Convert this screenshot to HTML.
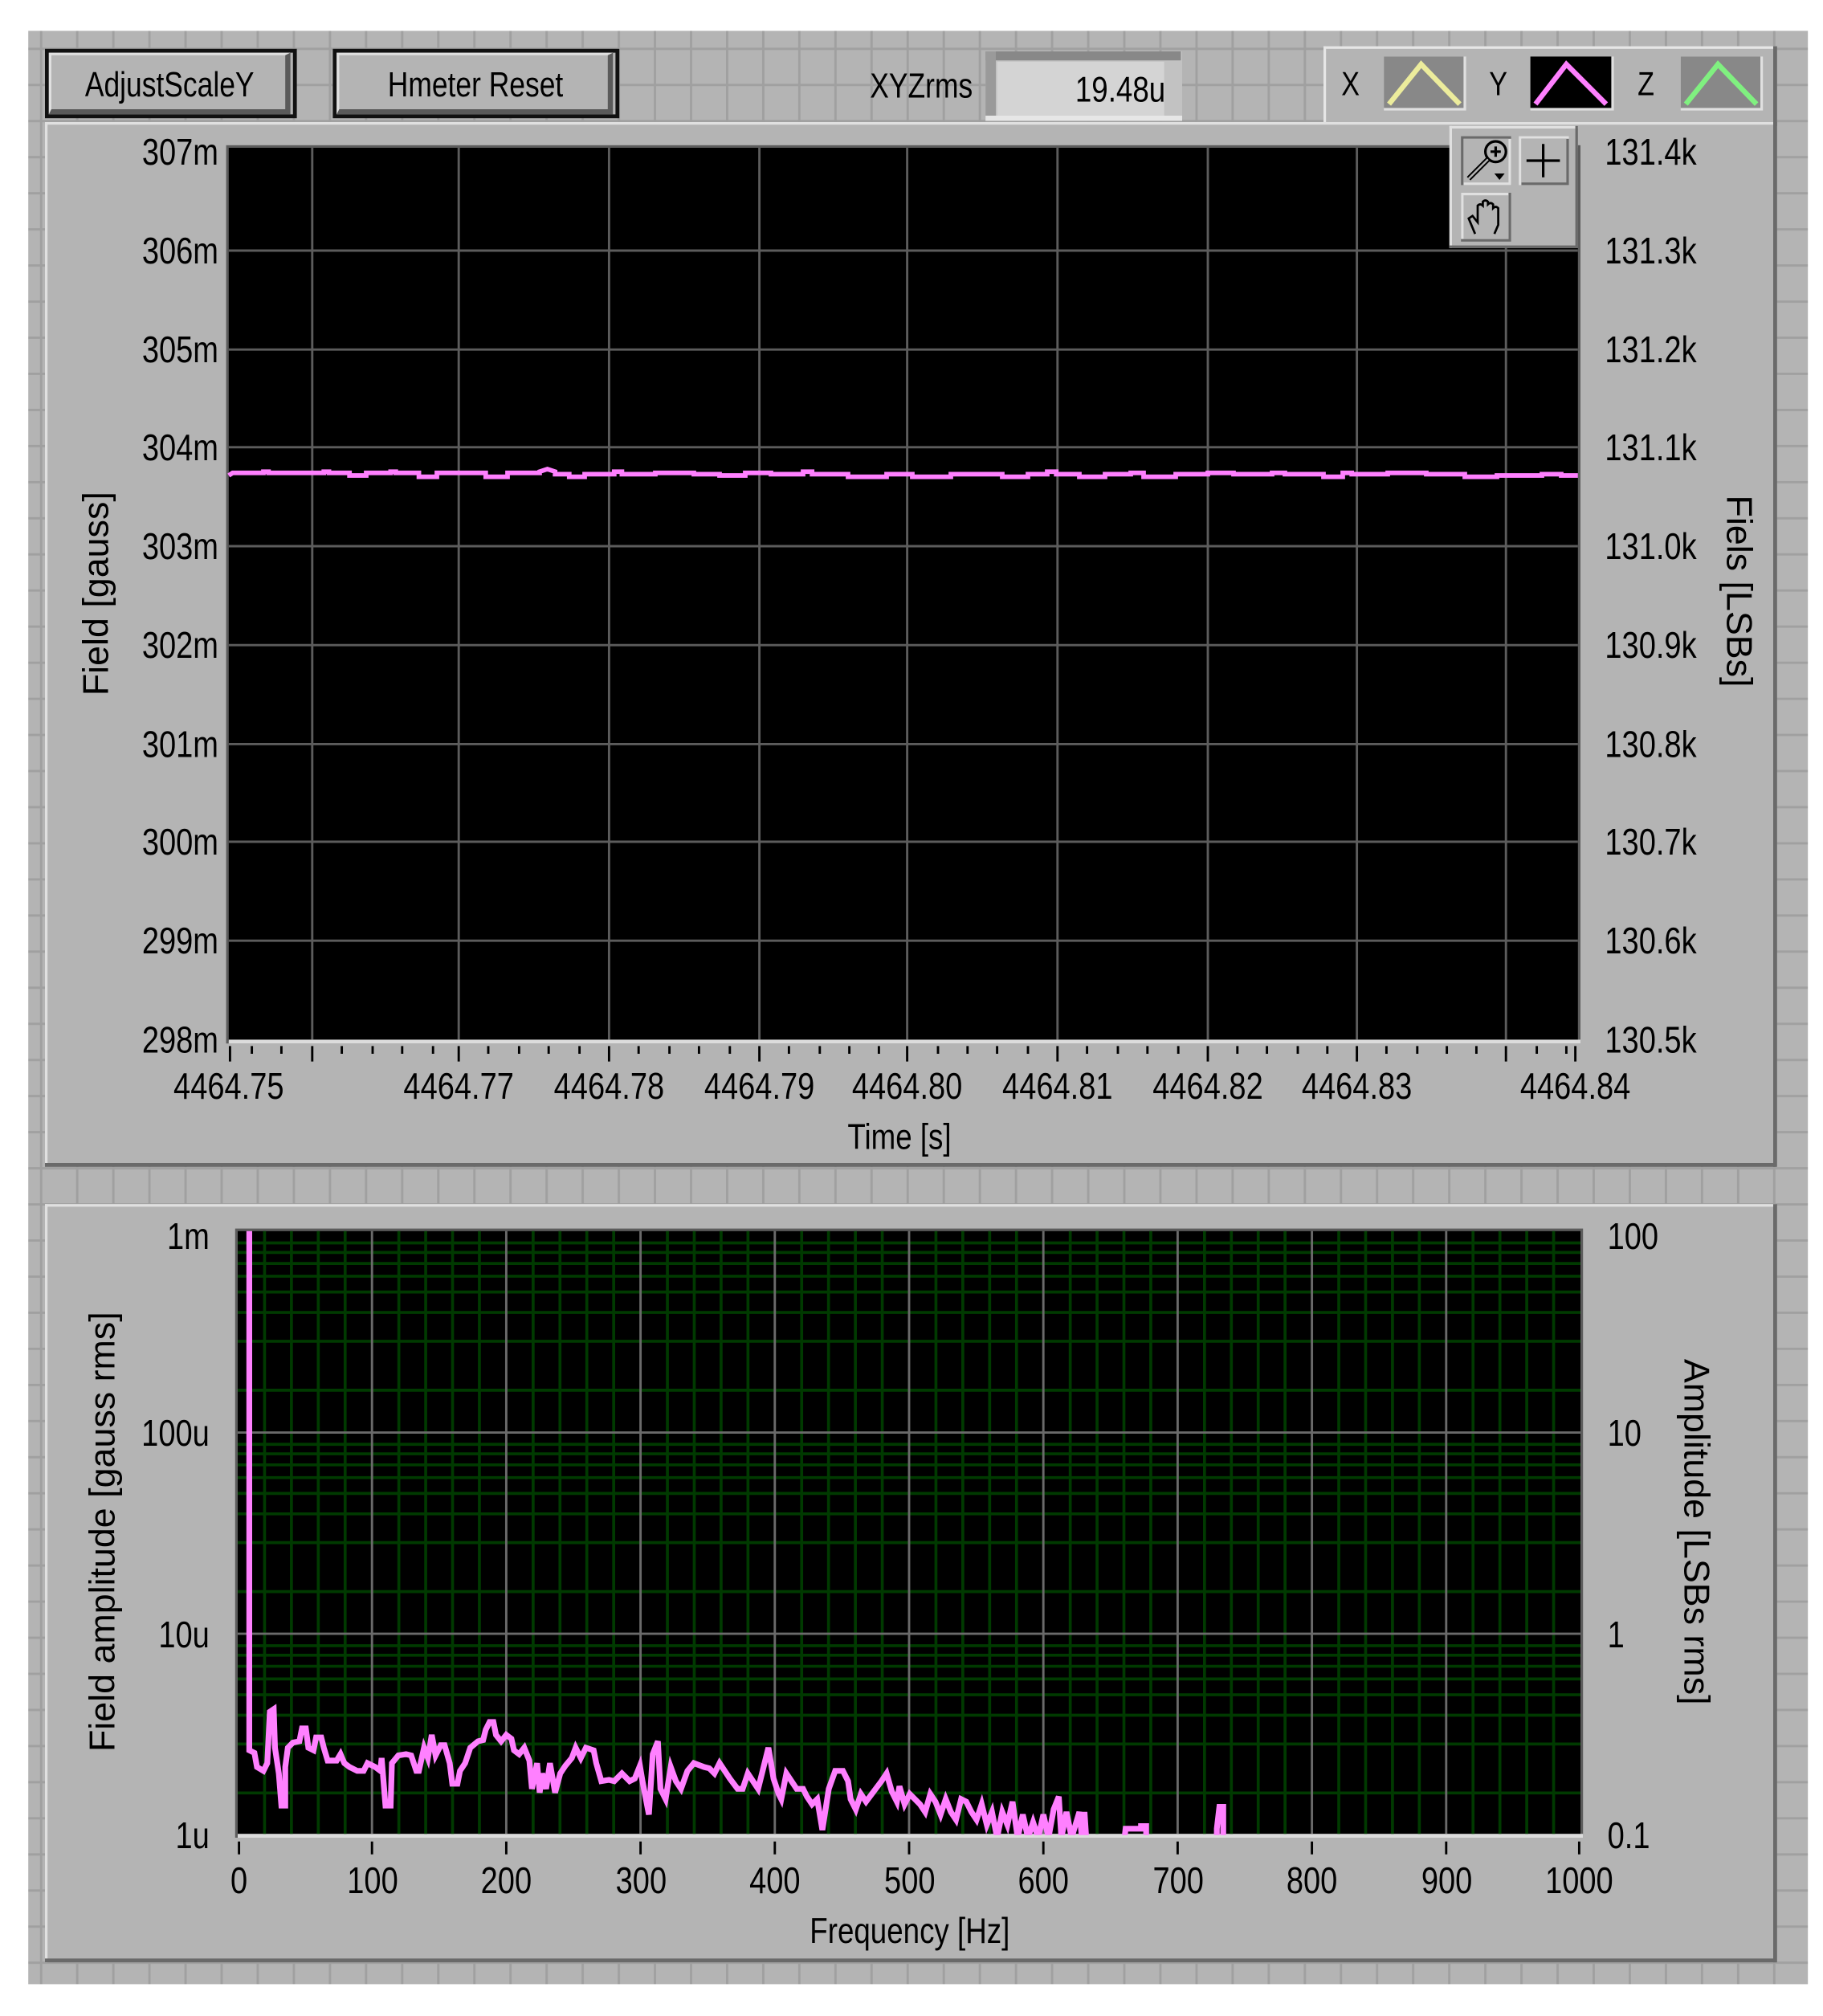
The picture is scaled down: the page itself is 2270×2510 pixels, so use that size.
<!DOCTYPE html>
<html><head><meta charset="utf-8">
<style>
html,body{margin:0;padding:0;background:#fff;}
svg{display:block;}
text{font-family:"Liberation Sans",sans-serif;fill:#000;transform-box:fill-box;}
.e{text-anchor:end;transform:scaleX(0.82);transform-origin:right center;}
.m{text-anchor:middle;transform:scaleX(0.82);transform-origin:center center;}
.s{text-anchor:start;transform:scaleX(0.82);transform-origin:left center;}
</style></head><body>
<svg width="2270" height="2510" viewBox="0 0 1418.75 1568.75" xmlns="http://www.w3.org/2000/svg">
<defs>
<pattern id="pg" x="3" y="9" width="28.1" height="28.1" patternUnits="userSpaceOnUse">
<rect width="28.1" height="28.1" fill="#b4b4b4"/>
<rect x="0" y="0" width="1.8" height="28.1" fill="#a0a0a0"/>
<rect x="0" y="0" width="28.1" height="1.8" fill="#a0a0a0"/>
</pattern>
</defs>
<rect x="0" y="0" width="1418.75" height="1568.75" fill="#fff"/>
<rect x="22" y="24" width="1385" height="1520" fill="url(#pg)"/>

<!-- buttons -->
<rect x="35" y="38" width="196" height="54" fill="#111"/>
<rect x="38" y="41" width="190" height="48" fill="#b4b4b4"/>
<path d="M38 41 H226 L224 43 H40 V88 L38 89Z" fill="#e0e0e0"/>
<path d="M226 41 V89 H38 L40 85 H222 V43Z" fill="#5a5a5a"/>
<text x="132" y="75" class="m" font-size="27">AdjustScaleY</text>
<rect x="259" y="38" width="223" height="54" fill="#111"/>
<rect x="262" y="41" width="217" height="48" fill="#b4b4b4"/>
<path d="M262 41 H477 L475 43 H264 V88 L262 89Z" fill="#e0e0e0"/>
<path d="M477 41 V89 H262 L264 85 H473 V43Z" fill="#5a5a5a"/>
<text x="370" y="75" class="m" font-size="27">Hmeter Reset</text>

<text x="757" y="76" class="e" font-size="27">XYZrms</text>
<rect x="767" y="40" width="153" height="54" fill="#c2c2c2"/>
<rect x="767" y="40" width="152" height="7" fill="#888"/>
<rect x="767" y="40" width="8" height="52" fill="#9a9a9a"/>
<rect x="776" y="48" width="130" height="43" fill="#d4d4d4"/>
<rect x="767" y="90" width="153" height="4" fill="#e6e6e6"/>
<text x="907" y="79" class="e" font-size="28">19.48u</text>

<!-- legend -->
<rect x="1030" y="36" width="352" height="61" fill="#b4b4b4"/>
<rect x="1030" y="36" width="352" height="2" fill="#e6e6e6"/>
<rect x="1030" y="36" width="2" height="60" fill="#e6e6e6"/>
<rect x="1031" y="95" width="351" height="3" fill="#6a6a6a"/>
<rect x="1380" y="36" width="3" height="62" fill="#6a6a6a"/>
<text x="1051" y="74" class="m" font-size="26">X</text>
<rect x="1077" y="44" width="64" height="42" fill="#e0e0e0"/><rect x="1077" y="44" width="62" height="40" fill="#888"/>
<polyline points="1081,81 1106,50 1136,81" fill="none" stroke="#ecec9c" stroke-width="4"/>
<text x="1166" y="74" class="m" font-size="26">Y</text>
<rect x="1191" y="44" width="65" height="42" fill="#e0e0e0"/><rect x="1191" y="44" width="63" height="40" fill="#000"/>
<polyline points="1195,81 1219,50 1250,81" fill="none" stroke="#ff80ff" stroke-width="4"/>
<text x="1281" y="74" class="m" font-size="26">Z</text>
<rect x="1308" y="44" width="64" height="42" fill="#e0e0e0"/><rect x="1308" y="44" width="62" height="40" fill="#888"/>
<polyline points="1312,81 1337,50 1367,81" fill="none" stroke="#80f080" stroke-width="4"/>

<!-- top panel -->
<rect x="35" y="95" width="1347" height="812" fill="#b4b4b4"/>
<rect x="35" y="95" width="1347" height="2" fill="#e0e0e0"/>
<rect x="35" y="95" width="2" height="812" fill="#e0e0e0"/>
<rect x="35" y="905" width="1347" height="3" fill="#6a6a6a"/>
<rect x="1380" y="95" width="3" height="813" fill="#6a6a6a"/>

<rect x="176" y="113" width="1054" height="699" fill="#5c5c5c"/>
<rect x="178" y="115" width="1050" height="695" fill="#000"/>
<rect x="178" y="809" width="1052" height="3" fill="#dcdcdc"/>
<g stroke="#5c5c5c" stroke-width="1.8">
<line x1="178" y1="195" x2="1228" y2="195"/><line x1="178" y1="272" x2="1228" y2="272"/>
<line x1="178" y1="348" x2="1228" y2="348"/><line x1="178" y1="425" x2="1228" y2="425"/>
<line x1="178" y1="502" x2="1228" y2="502"/><line x1="178" y1="579" x2="1228" y2="579"/>
<line x1="178" y1="655" x2="1228" y2="655"/><line x1="178" y1="732" x2="1228" y2="732"/>
<line x1="243" y1="115" x2="243" y2="809"/><line x1="357" y1="115" x2="357" y2="809"/>
<line x1="474" y1="115" x2="474" y2="809"/><line x1="591" y1="115" x2="591" y2="809"/>
<line x1="706" y1="115" x2="706" y2="809"/><line x1="823" y1="115" x2="823" y2="809"/>
<line x1="940" y1="115" x2="940" y2="809"/><line x1="1056" y1="115" x2="1056" y2="809"/>
<line x1="1172" y1="115" x2="1172" y2="809"/>
</g>
<polyline fill="none" stroke="#ff80ff" stroke-width="3.6" points="178,370 181,368 205,368 205,367 209,367 209,368 252,368 252,367 256,367 256,368 272,368 272,370 285,370 285,368 304,368 304,367 308,367 308,368 326,368 326,371 340,371 340,368 378,368 378,371 395,371 395,368 420,368 420,367 426,365 432,367 432,369 443,369 443,371 455,371 455,369 478,369 478,367 484,367 484,369 510,369 510,368 540,368 540,369 560,369 560,370 580,370 580,368 600,368 600,369 625,369 625,367 632,367 632,369 660,369 660,371 690,371 690,369 710,369 710,371 740,371 740,369 780,369 780,371 800,371 800,369 815,369 815,367 822,367 822,369 840,369 840,371 860,371 860,369 880,369 880,368 890,368 890,371 915,371 915,369 940,369 940,368 960,368 960,369 990,369 990,368 1000,368 1000,369 1030,369 1030,371 1045,371 1045,368 1052,368 1052,369 1080,369 1080,368 1110,368 1110,369 1140,369 1140,371 1165,371 1165,370 1200,370 1200,369 1215,369 1215,370 1228,370"/>

<!-- tool palette -->
<rect x="1128" y="98" width="100" height="95" fill="#b4b4b4"/>
<rect x="1128" y="98" width="100" height="2" fill="#e0e0e0"/>
<rect x="1128" y="98" width="2" height="95" fill="#e0e0e0"/>
<rect x="1226" y="98" width="2" height="95" fill="#6a6a6a"/>
<rect x="1128" y="191" width="100" height="2" fill="#6a6a6a"/>
<rect x="1137" y="106" width="39" height="38" fill="#6a6a6a"/><rect x="1139" y="108" width="37" height="36" fill="#e0e0e0"/><rect x="1139" y="108" width="35" height="34" fill="#b4b4b4"/>
<circle cx="1164" cy="118" r="8" fill="none" stroke="#000" stroke-width="2"/>
<path d="M1160 118 H1168 M1164 114 V122" stroke="#000" stroke-width="2"/>
<path d="M1158 124 L1143 139" stroke="#000" stroke-width="4"/><path d="M1158 124 L1143 139" stroke="#b4b4b4" stroke-width="1.5"/>
<path d="M1163 135 H1171 L1167 140Z" fill="#000"/>
<rect x="1182" y="106" width="39" height="38" fill="#e0e0e0"/><rect x="1184" y="108" width="37" height="36" fill="#6a6a6a"/><rect x="1184" y="108" width="35" height="34" fill="#b4b4b4"/>
<path d="M1201 112 V138 M1188 125 H1214" stroke="#000" stroke-width="2"/>
<rect x="1137" y="150" width="39" height="38" fill="#6a6a6a"/><rect x="1137" y="150" width="37" height="36" fill="#e0e0e0"/><rect x="1139" y="152" width="35" height="34" fill="#b4b4b4"/>
<path d="M1148 182 L1143 170 L1146 168 L1150 173 V160 Q1152 158 1154 160 V157 Q1156 155 1158 157 V159 Q1160 157 1162 159 V162 Q1164 160 1166 162 V175 L1163 182" fill="none" stroke="#000" stroke-width="1.7"/>

<!-- top axis labels -->
<g font-size="29">
<text x="170" y="128" class="e">307m</text><text x="170" y="205" class="e">306m</text>
<text x="170" y="282" class="e">305m</text><text x="170" y="358" class="e">304m</text>
<text x="170" y="435" class="e">303m</text><text x="170" y="512" class="e">302m</text>
<text x="170" y="589" class="e">301m</text><text x="170" y="665" class="e">300m</text>
<text x="170" y="742" class="e">299m</text><text x="170" y="819" class="e">298m</text>
<text x="1249" y="128" class="s">131.4k</text><text x="1249" y="205" class="s">131.3k</text>
<text x="1249" y="282" class="s">131.2k</text><text x="1249" y="358" class="s">131.1k</text>
<text x="1249" y="435" class="s">131.0k</text><text x="1249" y="512" class="s">130.9k</text>
<text x="1249" y="589" class="s">130.8k</text><text x="1249" y="665" class="s">130.7k</text>
<text x="1249" y="742" class="s">130.6k</text><text x="1249" y="819" class="s">130.5k</text>
<text x="178" y="855" class="m">4464.75</text><text x="357" y="855" class="m">4464.77</text>
<text x="474" y="855" class="m">4464.78</text><text x="591" y="855" class="m">4464.79</text>
<text x="706" y="855" class="m">4464.80</text><text x="823" y="855" class="m">4464.81</text>
<text x="940" y="855" class="m">4464.82</text><text x="1056" y="855" class="m">4464.83</text>
<text x="1226" y="855" class="m">4464.84</text>
</g>
<g stroke="#000" stroke-width="1.8">
<path d="M179 814 V826 M243 814 V826 M357 814 V826 M474 814 V826 M591 814 V826 M706 814 V826 M823 814 V826 M940 814 V826 M1056 814 V826 M1172 814 V826 M1226 814 V826"/>
<path d="M196 814 V820 M219 814 V820 M266 814 V820 M290 814 V820 M313 814 V820 M337 814 V820 M380 814 V820 M404 814 V820 M427 814 V820 M451 814 V820 M497 814 V820 M521 814 V820 M544 814 V820 M568 814 V820 M614 814 V820 M638 814 V820 M661 814 V820 M684 814 V820 M730 814 V820 M753 814 V820 M776 814 V820 M800 814 V820 M846 814 V820 M870 814 V820 M893 814 V820 M917 814 V820 M963 814 V820 M986 814 V820 M1010 814 V820 M1033 814 V820 M1079 814 V820 M1103 814 V820 M1126 814 V820 M1149 814 V820 M1196 814 V820 M1219 814 V820"/>
</g>
<text x="700" y="894" class="m" font-size="28">Time [s]</text>
<text transform="translate(84,462) rotate(-90)" text-anchor="middle" font-size="28" style="transform-box:view-box">Field [gauss]</text>
<text transform="translate(1344,460) rotate(90)" text-anchor="middle" font-size="28" style="transform-box:view-box">Fiels [LSBs]</text>

<!-- bottom panel -->
<rect x="35" y="937" width="1347" height="590" fill="#b4b4b4"/>
<rect x="35" y="937" width="1347" height="2" fill="#e0e0e0"/>
<rect x="35" y="937" width="2" height="590" fill="#e0e0e0"/>
<rect x="35" y="1524" width="1347" height="3" fill="#6a6a6a"/>
<rect x="1380" y="937" width="3" height="590" fill="#6a6a6a"/>

<rect x="183" y="956" width="1049" height="474" fill="#5c5c5c"/>
<rect x="185" y="958" width="1045" height="470" fill="#000"/>
<rect x="185" y="1427" width="1047" height="3" fill="#dcdcdc"/>
<g stroke="#003a00" stroke-width="2.3">
<path d="M205.9 958 V1427 M226.8 958 V1427 M247.7 958 V1427 M268.6 958 V1427 M310.4 958 V1427 M331.3 958 V1427 M352.2 958 V1427 M373.1 958 V1427 M414.9 958 V1427 M435.8 958 V1427 M456.7 958 V1427 M477.6 958 V1427 M519.4 958 V1427 M540.3 958 V1427 M561.2 958 V1427 M582.1 958 V1427 M623.9 958 V1427 M644.8 958 V1427 M665.7 958 V1427 M686.6 958 V1427 M728.4 958 V1427 M749.3 958 V1427 M770.2 958 V1427 M791.1 958 V1427 M832.9 958 V1427 M853.8 958 V1427 M874.7 958 V1427 M895.6 958 V1427 M937.4 958 V1427 M958.3 958 V1427 M979.2 958 V1427 M1000.1 958 V1427 M1041.9 958 V1427 M1062.8 958 V1427 M1083.7 958 V1427 M1104.6 958 V1427 M1146.4 958 V1427 M1167.3 958 V1427 M1188.2 958 V1427 M1209.1 958 V1427"/>
<path d="M185 967.2 H1230 M185 974.6 H1230 M185 983.2 H1230 M185 993.1 H1230 M185 1005.4 H1230 M185 1021.3 H1230 M185 1043.7 H1230 M185 1081.8 H1230 M185 1123.9 H1230 M185 1131.3 H1230 M185 1139.9 H1230 M185 1149.8 H1230 M185 1162.1 H1230 M185 1178 H1230 M185 1200.4 H1230 M185 1238.5 H1230 M185 1280.6 H1230 M185 1288 H1230 M185 1296.6 H1230 M185 1306.5 H1230 M185 1318.8 H1230 M185 1334.7 H1230 M185 1357.1 H1230 M185 1395.2 H1230"/>
</g>
<g stroke="#6a6a6a" stroke-width="1.8">
<path d="M289.5 958 V1427 M394 958 V1427 M498.5 958 V1427 M603 958 V1427 M707.5 958 V1427 M812 958 V1427 M916.5 958 V1427 M1021 958 V1427 M1125.5 958 V1427"/>
<path d="M185 1114.7 H1230 M185 1271.3 H1230"/>
</g>
<svg x="185" y="958" width="1045" height="470" viewBox="185 958 1045 470" overflow="hidden">
<polyline fill="none" stroke="#ff80ff" stroke-width="4.5" stroke-linejoin="miter" points="194,950 194,1362 198,1364 200,1375 205,1378 208,1372 210,1332 213,1330 214,1360 217,1380 219,1405 222,1405 222,1375 224,1360 228,1356 233,1355 235,1345 238,1345 240,1360 244,1362 246,1352 250,1352 252,1360 255,1370 262,1370 265,1365 268,1372 272,1375 278,1378 283,1378 286,1372 290,1374 292,1375 296,1378 297,1368 300,1405 304,1405 305,1372 310,1366 316,1365 320,1366 322,1372 324,1378 326,1378 330,1360 333,1368 336,1350 339,1366 343,1358 346,1358 350,1372 352,1388 356,1388 358,1378 362,1372 366,1360 372,1355 376,1354 378,1346 381,1340 384,1340 386,1350 390,1355 394,1350 398,1353 400,1362 404,1365 408,1360 412,1370 414,1392 418,1372 420,1395 422,1380 425,1392 428,1372 432,1395 436,1380 440,1374 445,1368 448,1360 452,1368 456,1360 462,1362 464,1372 468,1386 474,1385 478,1386 484,1380 490,1386 494,1384 498,1374 500,1386 505,1412 508,1365 512,1355 514,1392 518,1400 522,1375 526,1386 530,1392 535,1378 540,1372 548,1375 552,1376 556,1380 560,1372 564,1378 568,1384 574,1392 578,1392 582,1380 586,1386 590,1392 594,1376 598,1360 602,1384 606,1396 608,1400 612,1380 616,1386 620,1392 625,1392 628,1398 632,1404 636,1400 640,1424 645,1392 650,1378 656,1378 660,1386 662,1400 666,1408 670,1396 674,1402 680,1394 686,1386 690,1380 694,1394 698,1402 700,1390 704,1404 708,1396 712,1400 716,1404 720,1410 724,1396 728,1402 732,1412 736,1400 740,1410 744,1416 748,1400 752,1402 756,1410 760,1416 764,1404 768,1420 772,1410 776,1430 780,1410 784,1420 788,1402 792,1430 796,1412 800,1430 804,1418 808,1430 812,1412 816,1430 820,1408 824,1398 826,1430 830,1410 834,1430 840,1410 842,1430 844,1410 846,1440"/>
<polyline fill="none" stroke="#ff80ff" stroke-width="4.5" points="874,1440 876,1423 888,1423 888,1421 892,1421 892,1440"/>
<polyline fill="none" stroke="#ff80ff" stroke-width="4.5" points="947,1440 947,1423 949,1406 952,1406 952,1440"/>
</svg>
<g font-size="29">
<text x="163" y="972" class="e">1m</text><text x="163" y="1125" class="e">100u</text>
<text x="163" y="1282" class="e">10u</text><text x="163" y="1438" class="e">1u</text>
<text x="1251" y="972" class="s">100</text><text x="1251" y="1125" class="s">10</text>
<text x="1251" y="1282" class="s">1</text><text x="1251" y="1438" class="s">0.1</text>
<text x="186" y="1473" class="m">0</text><text x="290" y="1473" class="m">100</text>
<text x="394" y="1473" class="m">200</text><text x="499" y="1473" class="m">300</text>
<text x="603" y="1473" class="m">400</text><text x="708" y="1473" class="m">500</text>
<text x="812" y="1473" class="m">600</text><text x="917" y="1473" class="m">700</text>
<text x="1021" y="1473" class="m">800</text><text x="1126" y="1473" class="m">900</text>
<text x="1229" y="1473" class="m">1000</text>
</g>
<g stroke="#000" stroke-width="1.8">
<path d="M186 1433 V1443 M289.5 1433 V1443 M394 1433 V1443 M498.5 1433 V1443 M603 1433 V1443 M707.5 1433 V1443 M812 1433 V1443 M916.5 1433 V1443 M1021 1433 V1443 M1125.5 1433 V1443 M1229 1433 V1443"/>
</g>
<text x="708" y="1512" class="m" font-size="28">Frequency [Hz]</text>
<text transform="translate(89,1192) rotate(-90)" text-anchor="middle" font-size="28" style="transform-box:view-box">Field amplitude  [gauss rms]</text>
<text transform="translate(1311,1192) rotate(90)" text-anchor="middle" font-size="28" style="transform-box:view-box">Amplitude [LSBs rms]</text>
</svg>
</body></html>
